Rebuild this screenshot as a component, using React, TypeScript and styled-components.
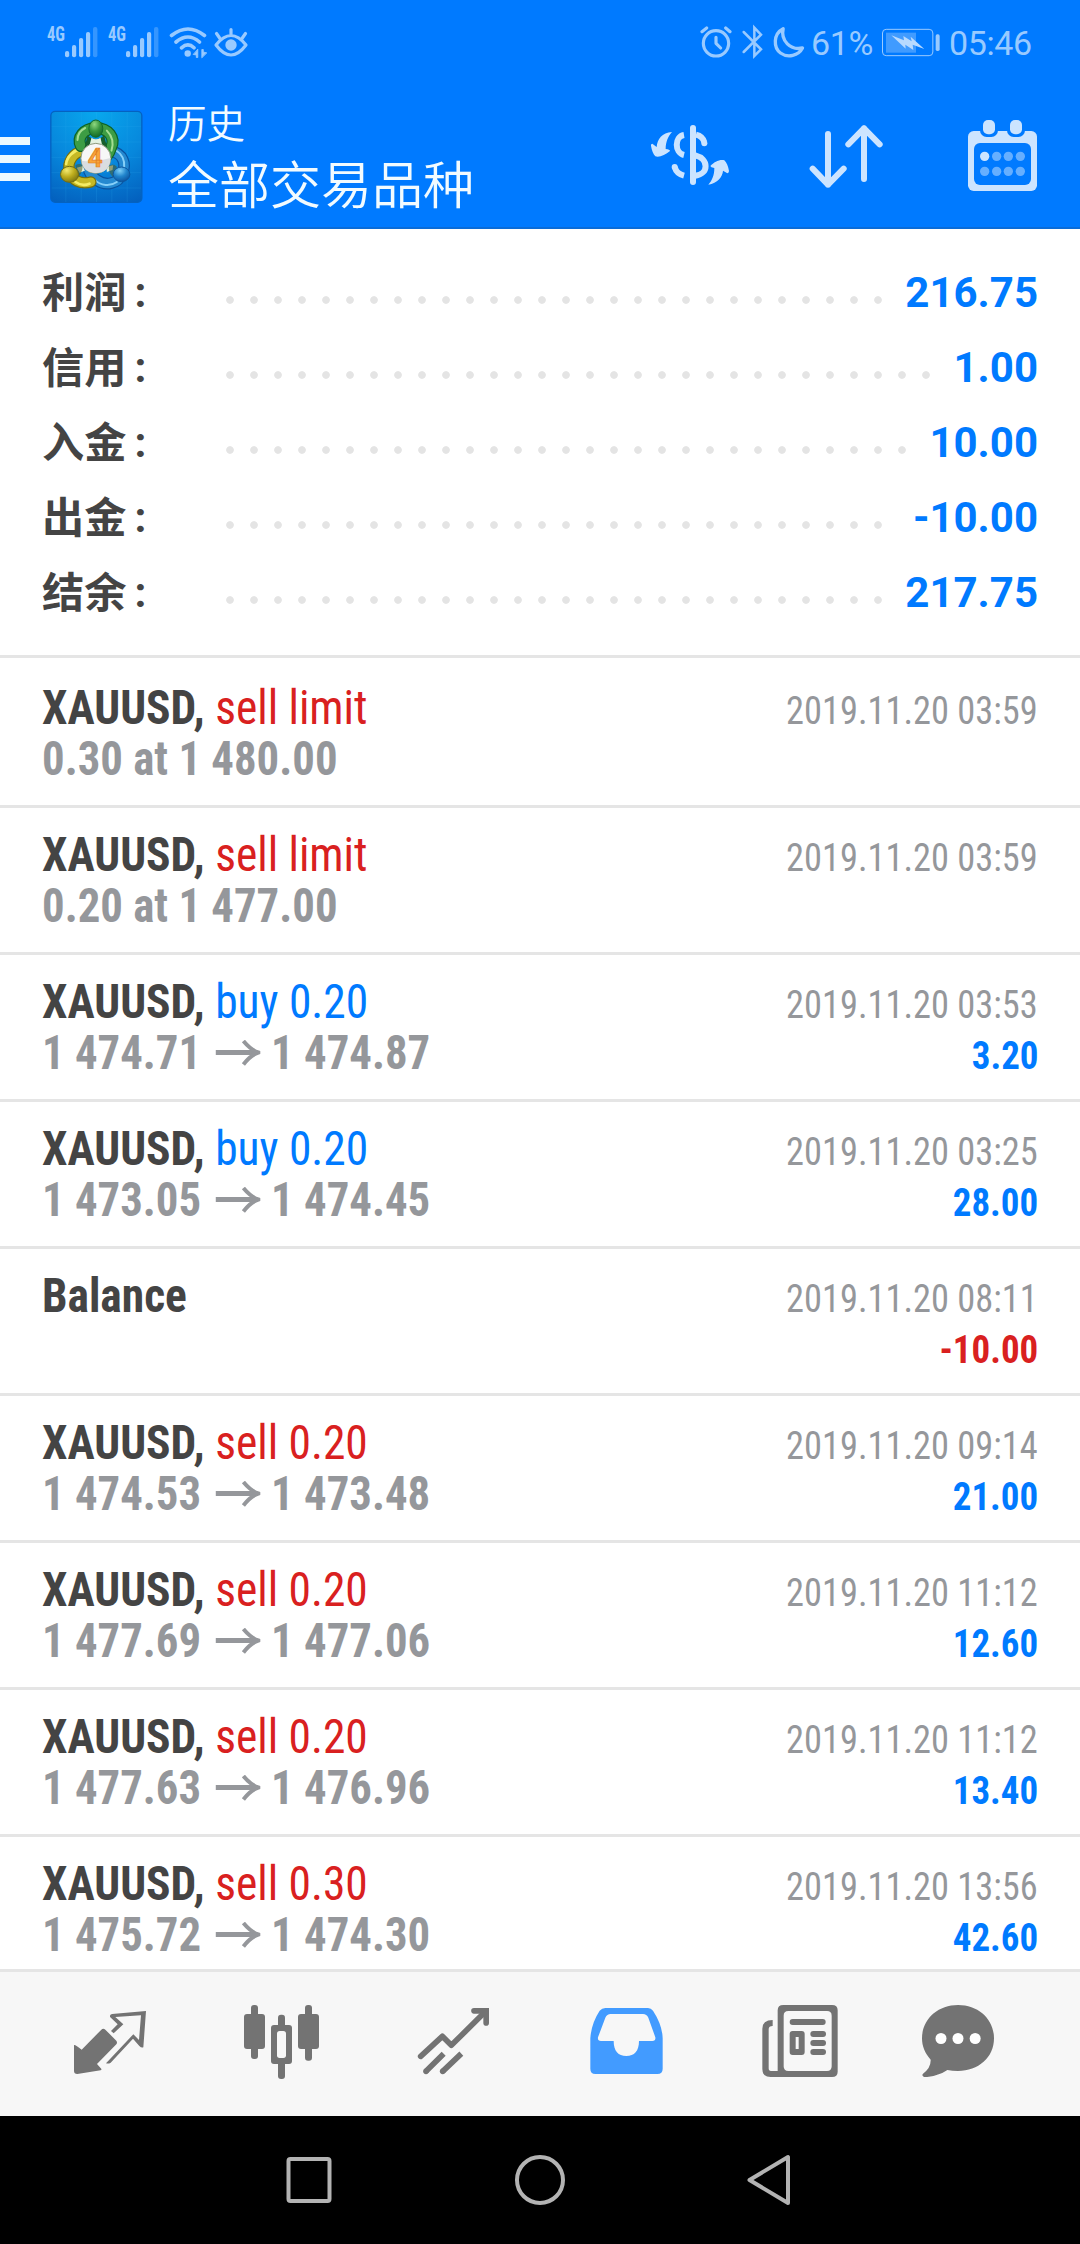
import React from "react";
import styled, { createGlobalStyle } from "styled-components";

const GlobalStyle = createGlobalStyle`
  * { box-sizing: border-box; }
  body {
    margin: 0;
    background: #fff;
    font-family: Roboto, "Noto Sans CJK SC", sans-serif;
  }
  svg { display: block; flex: none; }
`;

const blue = "#007aff";
const red = "#d92020";
const statusTint = "#99caff";
const iconTint = "#cce4ff";
const tabGray = "#737373";

const Screen = styled.div`
  width: 1080px;
  height: 2244px;
  display: flex;
  flex-direction: column;
  overflow: hidden;
  background: #fff;
`;

const Top = styled.header`
  flex: none;
  height: 229px;
  background: ${blue};
  border-bottom: 2px solid #0a6cd8;
`;

const StatusBar = styled.div`
  height: 84px;
  display: flex;
  justify-content: space-between;
  padding: 20px 46px 0 47px;
`;

const StatusGroup = styled.div`
  display: flex;
  height: 44px;
`;

const StatusText = styled.span<{ $width: number }>`
  width: ${(p) => p.$width}px;
  color: ${statusTint};
  font-size: 34px;
  line-height: 46px;
  letter-spacing: -0.4px;
  white-space: nowrap;
`;

const ActionBar = styled.div`
  height: 143px;
  display: flex;
  padding-right: 42px;
`;

const MenuButton = styled.div`
  width: 30px;
  padding-top: 53px;
  display: flex;
  flex-direction: column;
  gap: 10px;
`;

const MenuLine = styled.span`
  height: 8px;
  background: #ebf8ff;
`;

const LogoBox = styled.div`
  padding: 26px 0 0 20px;
`;

const Titles = styled.div`
  flex: 1;
  padding: 13px 0 0 25px;
  color: #f2fbff;
  font-family: "Noto Sans CJK SC", sans-serif;
  font-weight: 350;
`;

const Caption = styled.div`
  font-size: 38.6px;
  line-height: 48px;
`;

const Title = styled.div`
  font-size: 51px;
  line-height: 74px;
`;

const Actions = styled.div`
  display: flex;
  padding-top: 34px;
`;

const Action = styled.div<{ $gap: number }>`
  margin-left: ${(p) => p.$gap}px;
`;

const Content = styled.main`
  flex: 1;
  min-height: 0;
  overflow: hidden;
`;

const Summary = styled.section`
  height: 429px;
  padding: 25px 42px 0;
  border-bottom: 3px solid #e5e5e5;
  margin-bottom: 3px;
`;

const SummaryRow = styled.div`
  height: 75px;
  display: flex;
  font-size: 42px;
  font-weight: 700;
`;

const SummaryLabel = styled.span`
  width: 176px;
  display: flex;
  color: #444;
  font-size: 42.2px;
  line-height: 71px;
  font-family: "Noto Sans CJK SC", sans-serif;
`;

const Colon = styled.span`
  padding-left: 8px;
  font-family: Roboto, sans-serif;
  line-height: 78px;
`;

const Dots = styled.span`
  flex: 1;
  height: 24px;
  margin: 34px 18px 0 0;
  background: radial-gradient(circle at 12px 12px, #e4e4e4 3.4px, transparent 4.2px) 0 0 / 24px 24px repeat-x;
`;

const SummaryValue = styled.span`
  color: ${blue};
  line-height: 77px;
`;

const Row = styled.article`
  height: 147px;
  display: flex;
  justify-content: space-between;
  padding: 21px 42px 0;
  border-bottom: 3px solid #e5e5e5;
  font-family: "Roboto Condensed", Roboto, sans-serif;
  font-stretch: 75%;
  white-space: nowrap;
`;

const Side = styled.div<{ $right?: boolean }>`
  display: flex;
  flex-direction: column;
  align-items: ${(p) => (p.$right ? "flex-end" : "flex-start")};
  font-size: ${(p) => (p.$right ? 39 : 48)}px;
  line-height: 51px;
  padding-top: ${(p) => (p.$right ? 4 : 0)}px;
`;

const Line = styled.div`
  height: 51px;
  display: flex;
  white-space: pre;
  transform: scaleX(0.947);
  transform-origin: left;
`;

const Symbol = styled.span`
  color: #444;
  font-weight: 700;
`;

const Kind = styled.span<{ $sell: boolean }>`
  color: ${(p) => (p.$sell ? red : blue)};
`;

const Price = styled(Line)`
  color: #95979b;
  font-weight: 700;
  align-items: center;
  transform: scaleX(0.933);
`;

const Time = styled(Line)`
  color: #95979b;
  transform: scaleX(0.933);
  transform-origin: right;
`;

const Profit = styled(Line)<{ $loss: boolean }>`
  color: ${(p) => (p.$loss ? red : blue)};
  font-weight: 700;
  transform-origin: right;
`;

const ArrowBox = styled.span`
  padding: 0 12px 0 15px;
`;

const Tabs = styled.nav`
  flex: none;
  height: 147px;
  display: flex;
  padding: 23px 24px 0;
  background: #f7f7f7;
  border-top: 3px solid #e5e5e5;
`;

const Tab = styled.div`
  width: 172px;
  display: flex;
  justify-content: center;
`;

const SystemBar = styled.footer`
  flex: none;
  height: 128px;
  display: flex;
  justify-content: center;
  align-items: center;
  gap: 180px;
  background: #000;
`;

const Signal = () => (
  <svg width="61" height="44" viewBox="47 20 61 44" fill={statusTint}>
    <text x="47" y="41" fontSize="20" fontWeight="700" fontFamily="Roboto Condensed, Roboto" textLength="18" lengthAdjust="spacingAndGlyphs">4G</text>
    <rect x="65" y="51" width="4.2" height="6.3" rx="2" />
    <rect x="72" y="45" width="4.2" height="12.3" rx="2" />
    <rect x="79" y="38" width="4.2" height="19.3" rx="2" />
    <rect x="86" y="32" width="4.2" height="25.3" rx="2" />
    <rect x="93" y="27" width="4.4" height="30.3" rx="2" opacity=".35" />
  </svg>
);

const Wifi = () => (
  <svg width="44" height="44" viewBox="167 20 44 44" fill="none" stroke={statusTint} strokeWidth="3.600" strokeLinecap="round">
    <path d="M169.500 35.500Q186 22.500 202.500 35.500M174 42Q186 32 197.500 42M179.500 47.800Q186 42 192 47.800" />
    <circle cx="185.700" cy="53.500" r="3.200" fill={statusTint} stroke="none" />
    <path d="M195.800 49.500V57.500H194.300V55L191.500 54.500ZM199.800 57.500V49.500H201.300V52L204.500 52.800Z" fill={statusTint} stroke={statusTint} strokeWidth=".8" />
  </svg>
);

const Eye = () => (
  <svg width="36" height="44" viewBox="212.500 20 36 44" fill="none" stroke={statusTint} strokeWidth="3.200" strokeLinecap="round">
    <path d="M215.500 45Q230.500 26 245.500 45Q230.500 65 215.500 45ZM230.500 29.500V35M216 33.500L219.500 38.500M245 33.500L241.500 38.500" strokeLinejoin="round" />
    <circle cx="230.500" cy="45" r="5.700" fill={statusTint} stroke="none" />
  </svg>
);

const Alarm = () => (
  <svg width="41" height="44" viewBox="180 0 123 132" fill="none" stroke={statusTint} strokeWidth="9.500" strokeLinecap="round">
    <circle cx="228" cy="70" r="38" />
    <path d="M228 52V70L242 84" strokeLinejoin="round" />
    <path d="M186 35L200 24M257 24L270 35" />
  </svg>
);

const Bluetooth = () => (
  <svg width="31.500" height="44" viewBox="303 0 94.500 132" fill="none" stroke={statusTint} strokeWidth="7.500" strokeLinecap="round">
    <path d="M311 36L363 88L343 108V23L363 44L311 96" />
  </svg>
);

const Moon = () => (
  <svg width="38.500" height="44" viewBox="397.500 0 115.500 132" fill="none" stroke={statusTint} strokeWidth="10" strokeLinejoin="round">
    <path d="M428 26C397 42 399 84 420 99C442 115 474 107 486 84C450 92 420 62 428 26Z" />
  </svg>
);

const Battery = () => (
  <svg width="68" height="44" viewBox="723 0 204 132" fill="none">
    <rect x="727.500" y="28" width="151" height="79" rx="11" stroke={statusTint} strokeWidth="3" />
    <rect x="738" y="38" width="90" height="60" fill="#409bff" />
    <rect x="887" y="43" width="12" height="50" rx="5" fill={statusTint} />
    <path d="M754 46L792 61L790 48L815 64L812 50L853 87L818 74L820 90L796 74L797 86Z" fill="#b8daff" />
  </svg>
);

const Logo = () => (
  <svg width="93" height="94" viewBox="149.500 60 279 282">
    <defs>
      <radialGradient id="sky" cx=".5" cy="0" r="1.100">
        <stop offset="0" stopColor="#08a8ee" />
        <stop offset=".55" stopColor="#0787dc" />
        <stop offset="1" stopColor="#035fbd" />
      </radialGradient>
      <radialGradient id="green" cx=".4" cy=".25" r=".8">
        <stop offset="0" stopColor="#8fd880" />
        <stop offset=".5" stopColor="#38963f" />
        <stop offset="1" stopColor="#0f6424" />
      </radialGradient>
      <radialGradient id="yellow" cx=".35" cy=".25" r=".8">
        <stop offset="0" stopColor="#f3ea70" />
        <stop offset=".5" stopColor="#bfae1e" />
        <stop offset="1" stopColor="#7a7410" />
      </radialGradient>
      <radialGradient id="azure" cx=".4" cy=".25" r=".8">
        <stop offset="0" stopColor="#7fd0f8" />
        <stop offset=".5" stopColor="#2084cc" />
        <stop offset="1" stopColor="#0a4f9c" />
      </radialGradient>
    </defs>
    <rect x="152" y="64" width="273" height="273" rx="13" fill="url(#sky)" stroke="#0562c0" strokeWidth="4" />
    <path d="M197 66V336M243 66V336M289 66V336M335 66V336M381 66V336M154 110H423M154 156H423M154 202H423M154 248H423M154 294H423" stroke="#39b4f4" strokeWidth="1.500" opacity=".3" />
    <g fill="none" strokeLinecap="round">
      <path d="M334 184C368 190 380 222 366 250C354 284 314 288 290 270C276 262 270 252 266 242" stroke="#09529f" strokeWidth="35" />
      <path d="M334 184C368 190 380 222 366 250C354 284 314 288 290 270C276 262 270 252 266 242" stroke="#2589d0" strokeWidth="28" />
      <path d="M346 180C365 192 374 212 372 232M282 268C302 288 330 290 350 276" stroke="#86d0f8" strokeWidth="6" />
      <path d="M272 276C242 284 214 272 208 242C200 216 220 188 248 182" stroke="#77700d" strokeWidth="34" />
      <path d="M272 276C242 284 214 272 208 242C200 216 220 188 248 182" stroke="#c6b925" strokeWidth="27" />
      <path d="M198 222C200 199 220 182 244 176M226 276C240 286 256 286 268 281" stroke="#f4ec66" strokeWidth="8" />
      <path d="M242 168C230 142 250 116 286 114C326 114 346 144 333 172C329 186 322 196 316 204" stroke="#0d6226" strokeWidth="36" />
      <path d="M242 168C230 142 250 116 286 114C326 114 346 144 333 172C329 186 322 196 316 204" stroke="#3d9d44" strokeWidth="29" />
      <path d="M232 150C232 132 242 120 255 114M320 122C336 138 341 160 334 182" stroke="#a4dd92" strokeWidth="6" />
    </g>
    <path d="M262 136Q287 160 312 136L322 178H252Z" fill="#175f2c" />
    <path d="M274 143Q287 152 301 143L306 166H268ZM230 233L248 228L254 242L238 248ZM319 230L339 226L337 240L320 246Z" fill="#e3f2e1" />
    <path d="M226 226Q238 218 248 226Q246 254 230 266ZM350 230Q338 218 326 228Q324 254 344 264Z" fill="#4e5a20" opacity=".55" />
    <ellipse cx="287" cy="116" rx="21" ry="26" fill="url(#green)" stroke="#136a2b" strokeWidth="3" />
    <ellipse cx="208" cy="253" rx="27" ry="24" fill="url(#yellow)" stroke="#736d12" strokeWidth="3" />
    <ellipse cx="364" cy="253" rx="25" ry="22" fill="url(#azure)" stroke="#0d579f" strokeWidth="3" />
    <ellipse cx="287" cy="205" rx="45" ry="45" fill="#f7f7f7" stroke="#8c9a7c" strokeWidth="3" />
    <path d="M244 212Q285 218 331 204Q330 248 287 249Q248 247 244 212Z" fill="#dadde0" />
    <text x="285" y="230" textAnchor="middle" fontSize="78" fontWeight="700" fontFamily="Roboto" fill="#f9a53a" stroke="#e07b20" strokeWidth="2">4</text>
  </svg>
);

const Currency = () => (
  <svg width="80" height="74" viewBox="30 294 240 222" fill="none" stroke={iconTint} strokeWidth="18">
    <path d="M159 324V486" strokeLinecap="round" />
    <path d="M132 345C103 350 103 398 132 405M132 467C117 463 107 452 104 441" />
    <path d="M168 344C181 347 190 356 193 367M166 406C207 416 207 462 166 467" />
    <circle cx="193" cy="370" r="9" fill={iconTint} stroke="none" />
    <circle cx="104" cy="441" r="9" fill={iconTint} stroke="none" />
    <path d="M96 336C66 338 52 358 50 381L37 371Q32 371 33 377C35 391 40 402 46 409C58 413 76 405 90 393Q90 389 77 387C77 365 84 350 96 336ZM205 494C232 490 248 470 249 452L262 460Q267 459 267 453C265 440 260 428 253 421C240 417 222 426 211 438Q212 442 223 444C223 466 216 482 205 494Z" fill={iconTint} stroke="none" />
  </svg>
);

const Sort = () => (
  <svg width="76" height="74" viewBox="504 294 228 222" fill="none" stroke={iconTint} strokeWidth="18" strokeLinecap="round" strokeLinejoin="round">
    <path d="M564 342V494M518 446L564 494L611 446M672 477V325M625 373L672 325L719 373" />
  </svg>
);

const dotColumns = [1034, 1070, 1105, 1141];

const Calendar = () => (
  <svg width="71" height="74" viewBox="981 294 213 222">
    <rect x="984" y="333" width="207" height="180" rx="17" fill={iconTint} />
    <rect x="1002" y="369" width="171" height="126" rx="18" fill={blue} />
    {[1029, 1110].map((x) => (
      <g key={x}>
        <rect x={x - 9} y="291" width="54" height="60" rx="20" fill={blue} />
        <rect x={x} y="300" width="36" height="43" rx="15" fill={iconTint} />
      </g>
    ))}
    {[409, 454].map((y) =>
      dotColumns.map((x, i) => (
        <circle key={`${x}-${y}`} cx={x} cy={y} r="14" fill={i === 0 && y === 409 ? iconTint : "#66afff"} />
      ))
    )}
  </svg>
);

const LongArrow = () => (
  <svg width="48" height="26" viewBox="0 0 45 26" preserveAspectRatio="none" fill="none" stroke="#95979b">
    <path d="M0 12.500H42" strokeWidth="4.800" />
    <path d="M28 1C33 7 37 10.500 43 12.500C37 14.500 33 18 28 24.500" strokeWidth="4" />
  </svg>
);

const TabIcon = ({ left, children }: { left: number; children: React.ReactNode }) => (
  <svg width="100" height="90" viewBox={`${left} 0 300 270`} fill={tabGray}>
    {children}
  </svg>
);

const QuotesIcon = () => (
  <TabIcon left={0}>
    <path d="M124 104Q130 99 136 104L169 137Q173 143 169 148L111 207L125 223L122 226L52 237Q42 237 42 228V150Q47 149 65 164Z" />
    <path d="M138 205L148 194L220 118L237 135L243 61L166 66L190 88L161 115L153 108L173 88L151 67Q147 59 156 57L258 48L250 157Q244 159 238 153L219 131L152 203Q146 207 138 205Z" />
  </TabIcon>
);

const ChartIcon = () => (
  <TabIcon left={516}>
    <rect x="573" y="30" width="21" height="162" rx="9" />
    <rect x="552" y="57" width="63" height="105" rx="9" />
    <rect x="735" y="30" width="21" height="167" rx="9" />
    <rect x="714" y="57" width="63" height="105" rx="9" />
    <rect x="654" y="59" width="21" height="60" rx="9" />
    <rect x="654" y="190" width="21" height="62" rx="9" />
    <rect x="633" y="90" width="63" height="117" rx="9" />
    <rect x="651" y="108" width="27" height="81" rx="8" fill="#f7f7f7" />
  </TabIcon>
);

const TrendIcon = () => (
  <TabIcon left={1032}>
    <g fill="none" stroke={tabGray} strokeWidth="17">
      <path d="M1082 184L1147 124L1174 151L1274 52" strokeLinejoin="round" strokeLinecap="round" />
      <path d="M1242 47.500H1278.500V84" strokeLinecap="round" />
      <path d="M1151 176L1098 229M1204 176L1148 229" />
    </g>
    <circle cx="1098" cy="229" r="8.500" />
    <circle cx="1148" cy="229" r="8.500" />
    <path d="M1256 50H1282V75Z" />
  </TabIcon>
);

const InboxIcon = () => (
  <TabIcon left={-12}>
    <path fill="#429bff" fillRule="evenodd" d="M76 39H204Q213 39 219 47Q247 90 248 130V221Q248 237 232 237H46Q31 237 31 221V130Q34 85 59 47Q66 39 76 39ZM92 57Q81 57 76 68L54 127Q52 138 63 138H101C101 168 115 183 139 183C163 183 177 168 177 138H217Q228 137 226 127L205 68Q200 57 189 57Z" />
  </TabIcon>
);

const NewsIcon = () => (
  <TabIcon left={504}>
    <path fillRule="evenodd" d="M610 30H756Q773 30 773 46V230Q773 246 756 246H572Q547 246 547 222V101Q547 75 578 75V93Q566 93 566 103V220Q566 228 573 228H593V46Q593 30 610 30ZM625 48Q611 48 611 62V214Q611 228 625 228H741Q755 228 755 214V62Q755 48 741 48Z" />
    <rect x="629" y="72" width="108" height="18" rx="9" />
    <path fillRule="evenodd" d="M638 108H665Q674 108 674 117V171Q674 180 665 180H638Q629 180 629 171V117Q629 108 638 108ZM647 126V162H656V126Z" />
    <rect x="691" y="108" width="47" height="18" rx="9" />
    <rect x="691" y="135" width="47" height="18" rx="9" />
    <rect x="691" y="162" width="47" height="18" rx="9" />
  </TabIcon>
);

const ChatIcon = () => (
  <TabIcon left={1020}>
    <path d="M1134 30C1197 30 1242 74 1242 130C1242 188 1195 228 1134 228Q1117 228 1102 225C1083 238 1058 246 1032 246Q1024 242 1029 236Q1053 219 1052 194C1034 174 1026 153 1026 130C1026 74 1072 30 1134 30Z" />
    {[1083, 1134, 1185.5].map((x) => (
      <circle key={x} cx={x} cy="130.500" r="16.500" fill="#fff" />
    ))}
  </TabIcon>
);

const summary = [
  ["利润", "216.75"],
  ["信用", "1.00"],
  ["入金", "10.00"],
  ["出金", "-10.00"],
  ["结余", "217.75"],
];

type Deal = {
  symbol: string;
  kind?: string;
  note?: string;
  from?: string;
  to?: string;
  time: string;
  profit?: string;
};

const deals: Deal[] = [
  { symbol: "XAUUSD,", kind: "sell limit", note: "0.30 at 1 480.00", time: "2019.11.20 03:59" },
  { symbol: "XAUUSD,", kind: "sell limit", note: "0.20 at 1 477.00", time: "2019.11.20 03:59" },
  { symbol: "XAUUSD,", kind: "buy 0.20", from: "1 474.71", to: "1 474.87", time: "2019.11.20 03:53", profit: "3.20" },
  { symbol: "XAUUSD,", kind: "buy 0.20", from: "1 473.05", to: "1 474.45", time: "2019.11.20 03:25", profit: "28.00" },
  { symbol: "Balance", time: "2019.11.20 08:11", profit: "-10.00" },
  { symbol: "XAUUSD,", kind: "sell 0.20", from: "1 474.53", to: "1 473.48", time: "2019.11.20 09:14", profit: "21.00" },
  { symbol: "XAUUSD,", kind: "sell 0.20", from: "1 477.69", to: "1 477.06", time: "2019.11.20 11:12", profit: "12.60" },
  { symbol: "XAUUSD,", kind: "sell 0.20", from: "1 477.63", to: "1 476.96", time: "2019.11.20 11:12", profit: "13.40" },
  { symbol: "XAUUSD,", kind: "sell 0.30", from: "1 475.72", to: "1 474.30", time: "2019.11.20 13:56", profit: "42.60" },
];

const DealRow = ({ deal }: { deal: Deal }) => (
  <Row>
    <Side>
      <Line>
        <Symbol>{deal.symbol}</Symbol>
        {deal.kind && <Kind $sell={deal.kind.startsWith("sell")}> {deal.kind}</Kind>}
      </Line>
      <Price>
        {deal.note}
        {deal.from && (
          <>
            {deal.from}
            <ArrowBox>
              <LongArrow />
            </ArrowBox>
            {deal.to}
          </>
        )}
      </Price>
    </Side>
    <Side $right>
      <Time>{deal.time}</Time>
      {deal.profit && <Profit $loss={deal.profit.startsWith("-")}>{deal.profit}</Profit>}
    </Side>
  </Row>
);

const tabIcons = [QuotesIcon, ChartIcon, TrendIcon, InboxIcon, NewsIcon, ChatIcon];

export default function App() {
  return (
    <Screen>
      <GlobalStyle />
      <Top>
        <StatusBar>
          <StatusGroup>
            <Signal />
            <Signal />
            <Wifi />
            <Eye />
          </StatusGroup>
          <StatusGroup>
            <Alarm />
            <Bluetooth />
            <Moon />
            <StatusText $width={70}>61%</StatusText>
            <Battery />
            <StatusText $width={85}>05:46</StatusText>
          </StatusGroup>
        </StatusBar>
        <ActionBar>
          <MenuButton>
            <MenuLine />
            <MenuLine />
            <MenuLine />
          </MenuButton>
          <LogoBox>
            <Logo />
          </LogoBox>
          <Titles>
            <Caption>历史</Caption>
            <Title>全部交易品种</Title>
          </Titles>
          <Actions>
            <Action $gap={0}>
              <Currency />
            </Action>
            <Action $gap={78}>
              <Sort />
            </Action>
            <Action $gap={83}>
              <Calendar />
            </Action>
          </Actions>
        </ActionBar>
      </Top>
      <Content>
        <Summary>
          {summary.map(([label, value]) => (
            <SummaryRow key={label}>
              <SummaryLabel>
                {label}
                <Colon>:</Colon>
              </SummaryLabel>
              <Dots />
              <SummaryValue>{value}</SummaryValue>
            </SummaryRow>
          ))}
        </Summary>
        {deals.map((deal, i) => (
          <DealRow key={i} deal={deal} />
        ))}
      </Content>
      <Tabs>
        {tabIcons.map((Icon, i) => (
          <Tab key={i}>
            <Icon />
          </Tab>
        ))}
      </Tabs>
      <SystemBar>
        <svg width="50" height="54" viewBox="0 0 50 54" fill="none" stroke="#b3b3b3" strokeWidth="4">
          <rect x="5.500" y="6" width="41" height="42" rx="2" />
        </svg>
        <svg width="54" height="54" viewBox="0 0 54 54" fill="none" stroke="#b3b3b3" strokeWidth="4">
          <circle cx="27" cy="27" r="23" />
        </svg>
        <svg width="50" height="54" viewBox="0 0 50 54" fill="none" stroke="#b3b3b3" strokeWidth="4" strokeLinejoin="round">
          <path d="M2.500 27L41 4V50Z" />
        </svg>
      </SystemBar>
    </Screen>
  );
}
